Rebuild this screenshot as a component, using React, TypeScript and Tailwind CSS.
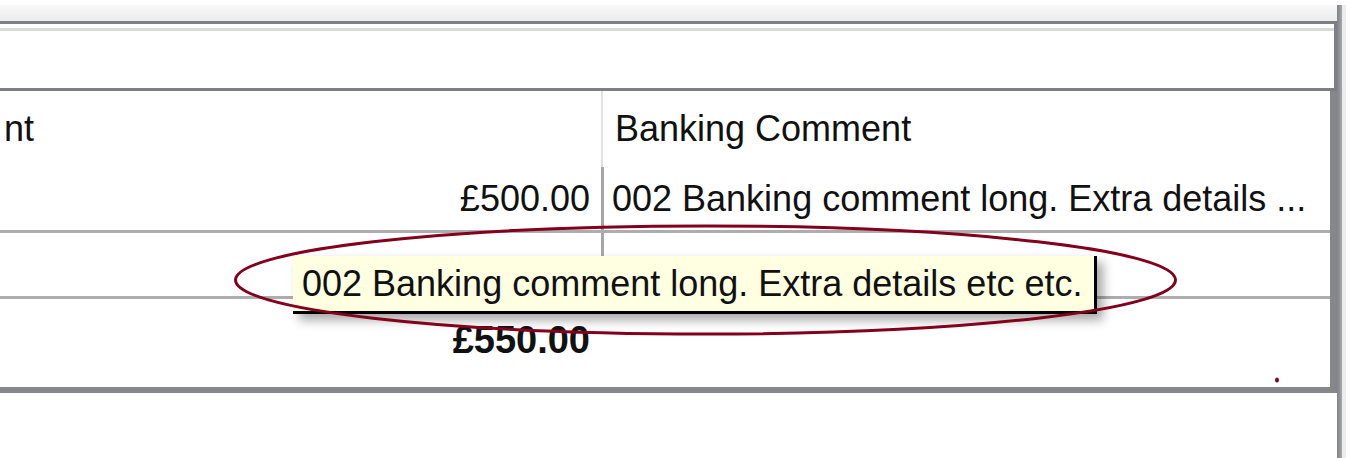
const rows = [
  { amount: '£500.00', comment: '002 Banking comment long. Extra details ...' },
  { amount: '', comment: '' },
];

function App() {
  return (
    <div className="relative flex h-[458px] w-[1358px] overflow-hidden bg-white pt-[5px] font-['Liberation_Sans',Arial,sans-serif] text-[36px] leading-none text-[#111]">
      {/* main window column */}
      <div className="flex w-[1337px] flex-col">
        {/* toolbar band */}
        <div className="h-[16px] bg-gradient-to-b from-[#f8f8f8] to-[#ececec]" />

        {/* upper empty panel */}
        <div className="flex h-[70px] flex-col border-t-[3px] border-r-[3px] border-b-[3px] border-[#7d7f84] bg-white">
          <div className="mt-[4px] h-[3px] bg-[#dadada]" />
        </div>

        {/* grid */}
        <div className="flex h-[302px] flex-col overflow-hidden border-r-[7px] border-b-[6px] border-[#85878b] bg-white">
          {/* header (first column scrolled off to the left) */}
          <div className="flex h-[76px]">
            <div className="flex w-[601px] items-center pl-[4px]">nt</div>
            <div className="w-[2px] bg-[#e2e2e2]" />
            <div className="flex flex-1 items-center pl-[12px]">Banking Comment</div>
          </div>

          {rows.map((row, i) => (
            <div key={i} className="flex h-[66px] border-b-[3px] border-[#adadad]">
              <div className="flex w-[601px] items-center justify-end pr-[11px]">{row.amount}</div>
              <div className="w-[3px] bg-[#a6a6a6]" />
              <div className="flex flex-1 items-center whitespace-nowrap pl-[8px]">{row.comment}</div>
            </div>
          ))}

          {/* totals */}
          <div className="flex flex-1">
            <div className="flex w-[601px] items-center justify-end pr-[11px] pb-[6px] text-[38px] font-bold">
              £550.00
            </div>
          </div>
        </div>
      </div>

      {/* outer frame edge */}
      <div className="w-[5px] bg-gradient-to-r from-[#7f8186] to-[#a4a7ad]" />
      <div className="w-[4px] bg-[#ececec]" />

      {/* tooltip */}
      <div className="absolute left-[293px] top-[256px] flex h-[58px] items-center border-r-[3px] border-b-[3px] border-black bg-[#ffffe1] pl-[9px] pr-[12px] shadow-[6px_6px_10px_rgba(0,0,0,0.35)]">
        002 Banking comment long. Extra details etc etc.
      </div>

      {/* annotation ellipse */}
      <svg className="absolute left-0 top-0" width="1358" height="458" viewBox="0 0 1358 458">
        <ellipse cx="705.5" cy="280" rx="470" ry="54" fill="none" stroke="#82001c" strokeWidth="3" />
        <ellipse cx="1277" cy="380" rx="2" ry="2.5" fill="#82001c" />
      </svg>
    </div>
  );
}

export default App;
